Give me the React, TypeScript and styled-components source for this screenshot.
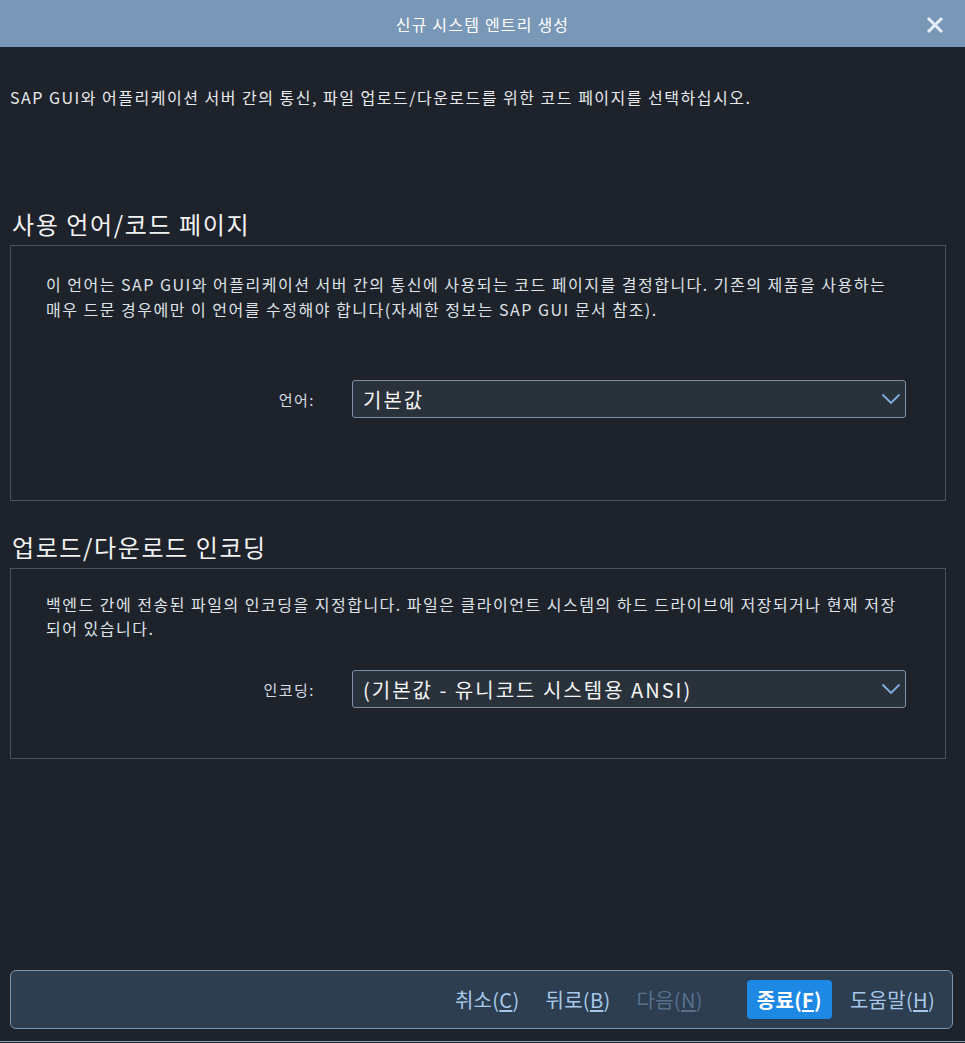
import React from "react";
import styled, { createGlobalStyle } from "styled-components";

const Global = createGlobalStyle`
  html, body { margin: 0; padding: 0; background: #1e222a; }
  body { font-family: "Noto Sans CJK KR", "Noto Sans", sans-serif; }
  * { box-sizing: border-box; }
`;

const Window = styled.div`
  width: 965px;
  height: 1043px;
  display: flex;
  flex-direction: column;
  background: #1e222a;
  color: #e4e7eb;
`;

const TitleBar = styled.div`
  height: 47px;
  flex: 0 0 47px;
  background: #7997b7;
  display: flex;
  align-items: center;
  justify-content: center;
  position: relative;
  color: #ffffff;
  font-size: 16px;
  letter-spacing: 1.2px;
  line-height: 20px;
`;

const CloseButton = styled.button`
  position: absolute;
  right: 20px;
  top: 15px;
  width: 20px;
  height: 20px;
  padding: 0;
  border: none;
  background: transparent;
  display: flex;
  align-items: center;
  justify-content: center;
`;

const Content = styled.div`
  flex: 1;
  padding: 38px 19px 0 10px;
  display: flex;
  flex-direction: column;
`;

const Intro = styled.p`
  margin: 0;
  font-size: 16px;
  letter-spacing: 1.5px;
  line-height: 24px;
  color: #e8eaed;
`;

const SectionTitle = styled.h2<{ $top: number }>`
  margin: ${(p) => p.$top}px 0 5px 2px;
  font-size: 24px;
  font-weight: 400;
  letter-spacing: 1.6px;
  line-height: 32px;
  color: #f2f2f2;
`;

const Panel = styled.section<{ $pt: number; $pb: number }>`
  border: 1px solid #47525f;
  padding: ${(p) => p.$pt}px 39px ${(p) => p.$pb}px 35px;
  display: flex;
  flex-direction: column;
`;

const PanelText = styled.p<{ $lh: number }>`
  margin: 0;
  font-size: 16px;
  letter-spacing: 1.5px;
  line-height: ${(p) => p.$lh}px;
  color: #dfe3e8;
`;

const FormRow = styled.div<{ $top: number }>`
  margin-top: ${(p) => p.$top}px;
  display: flex;
  align-items: center;
`;

const Label = styled.label`
  width: 306px;
  padding-right: 37px;
  text-align: right;
  font-size: 15px;
  letter-spacing: 1.5px;
  color: #d6dde5;
`;

const Select = styled.div`
  flex: 1;
  height: 38px;
  border: 1px solid #7d90a6;
  border-radius: 3px;
  background: #29313b;
  display: flex;
  align-items: center;
  justify-content: space-between;
  padding: 0 4px 0 10px;
  font-size: 20px;
  letter-spacing: 2px;
  color: #f4f4f4;
`;

const Footer = styled.div`
  margin: 0 12px 12px 10px;
  height: 59px;
  background: #2c3e50;
  border: 1px solid #8095ad;
  border-radius: 6px;
  display: flex;
  align-items: center;
  justify-content: flex-end;
  padding: 0 9px;
  gap: 10px;
`;

const Button = styled.button<{ $primary?: boolean; $disabled?: boolean }>`
  height: 39px;
  padding: 0 ${(p) => (p.$primary ? 10 : 8)}px;
  border: none;
  border-radius: 4px;
  font-family: "Noto Sans CJK KR", "Noto Sans", sans-serif;
  font-size: 20px;
  letter-spacing: 0.3px;
  font-weight: ${(p) => (p.$primary ? 700 : 400)};
  background: ${(p) => (p.$primary ? "#1e88e5" : "transparent")};
  color: ${(p) => (p.$primary ? "#ffffff" : p.$disabled ? "#58708a" : "#a8c8ea")};
  margin-left: ${(p) => (p.$primary ? "26px" : "0")};
  u { text-underline-offset: 2px; }
`;

const BottomLine = styled.div`
  height: 1px;
  background: #8fa3bb;
  margin-bottom: 1px;
`;

const Chevron = () => (
  <svg width="20" height="12" viewBox="0 0 20 12">
    <path d="M1.5 1.5 L10 10 L18.5 1.5" fill="none" stroke="#7fb0e0" strokeWidth="1.8" />
  </svg>
);

export default function App() {
  return (
    <>
      <Global />
      <Window>
        <TitleBar>
          신규 시스템 엔트리 생성
          <CloseButton aria-label="close">
            <svg width="18" height="18" viewBox="0 0 18 18">
              <path d="M2 2 L16 16 M16 2 L2 16" stroke="#e6eefa" strokeWidth="3" />
            </svg>
          </CloseButton>
        </TitleBar>
        <Content>
          <Intro>SAP GUI와 어플리케이션 서버 간의 통신, 파일 업로드/다운로드를 위한 코드 페이지를 선택하십시오.</Intro>
          <SectionTitle $top={99}>사용 언어/코드 페이지</SectionTitle>
          <Panel $pt={26} $pb={82}>
            <PanelText $lh={25}>
              이 언어는 SAP GUI와 어플리케이션 서버 간의 통신에 사용되는 코드 페이지를 결정합니다. 기존의 제품을 사용하는 매우 드문 경우에만 이 언어를 수정해야 합니다(자세한 정보는 SAP GUI 문서 참조).
            </PanelText>
            <FormRow $top={58}>
              <Label>언어:</Label>
              <Select>
                <span>기본값</span>
                <Chevron />
              </Select>
            </FormRow>
          </Panel>
          <SectionTitle $top={30}>업로드/다운로드 인코딩</SectionTitle>
          <Panel $pt={23} $pb={50}>
            <PanelText $lh={24}>
              백엔드 간에 전송된 파일의 인코딩을 지정합니다. 파일은 클라이언트 시스템의 하드 드라이브에 저장되거나 현재 저장되어 있습니다.
            </PanelText>
            <FormRow $top={30}>
              <Label>인코딩:</Label>
              <Select>
                <span>(기본값 - 유니코드 시스템용 ANSI)</span>
                <Chevron />
              </Select>
            </FormRow>
          </Panel>
        </Content>
        <Footer>
          <Button>취소(<u>C</u>)</Button>
          <Button>뒤로(<u>B</u>)</Button>
          <Button $disabled>다음(<u>N</u>)</Button>
          <Button $primary>종료(<u>F</u>)</Button>
          <Button>도움말(<u>H</u>)</Button>
        </Footer>
        <BottomLine />
      </Window>
    </>
  );
}
